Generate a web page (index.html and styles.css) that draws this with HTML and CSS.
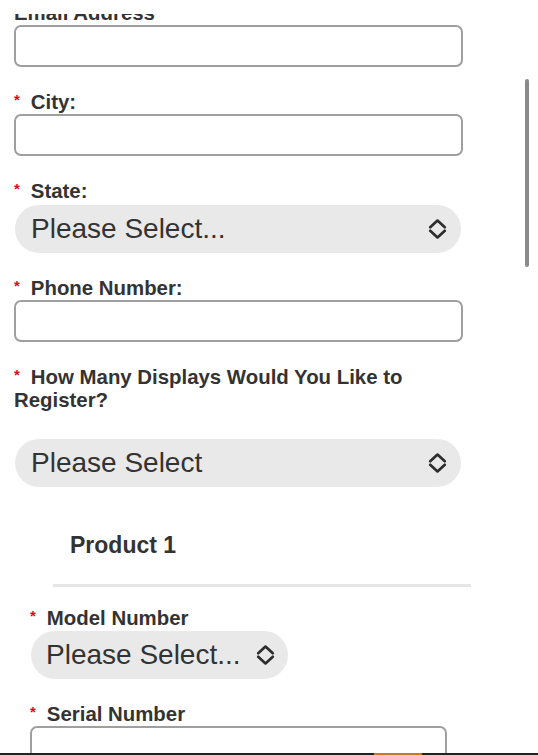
FILE: index.html
```html
<!DOCTYPE html>
<html lang="en">
<head>
<meta charset="utf-8">
<title>Register Displays</title>
<link rel="stylesheet" href="styles.css">
</head>
<body>
<div class="top-mask"></div>
<form class="form">
  <div class="field">
    <label class="label">Email Address</label>
    <input class="input" type="email">
  </div>
  <div class="field">
    <label class="label"><span class="req">*</span>City:</label>
    <input class="input" type="text">
  </div>
  <div class="field">
    <label class="label"><span class="req">*</span>State:</label>
    <div class="select">
      <span class="select-text">Please Select...</span>
      <svg class="chev" viewBox="0 0 19 22" width="19" height="22"><path d="M2.2 9.2 L9.5 2.6 L16.8 9.2 M2.2 12.8 L9.5 19.4 L16.8 12.8" fill="none" stroke="#2d2d2d" stroke-width="2.7" stroke-linecap="round" stroke-linejoin="round"/></svg>
    </div>
  </div>
  <div class="field">
    <label class="label"><span class="req">*</span>Phone Number:</label>
    <input class="input" type="tel">
  </div>
  <div class="field">
    <label class="label"><span class="req">*</span>How Many Displays Would You Like to Register?</label>
    <div class="select select-spaced">
      <span class="select-text">Please Select</span>
      <svg class="chev" viewBox="0 0 19 22" width="19" height="22"><path d="M2.2 9.2 L9.5 2.6 L16.8 9.2 M2.2 12.8 L9.5 19.4 L16.8 12.8" fill="none" stroke="#2d2d2d" stroke-width="2.7" stroke-linecap="round" stroke-linejoin="round"/></svg>
    </div>
  </div>

  <section class="product">
    <h2 class="product-title">Product 1</h2>
    <hr class="divider">
    <div class="pfield">
      <label class="label"><span class="req">*</span>Model Number</label>
      <div class="select select-small">
        <span class="select-text">Please Select...</span>
        <svg class="chev" viewBox="0 0 19 22" width="19" height="22"><path d="M2.2 9.2 L9.5 2.6 L16.8 9.2 M2.2 12.8 L9.5 19.4 L16.8 12.8" fill="none" stroke="#2d2d2d" stroke-width="2.7" stroke-linecap="round" stroke-linejoin="round"/></svg>
      </div>
    </div>
    <div class="pfield">
      <label class="label"><span class="req">*</span>Serial Number</label>
      <input class="input input-product" type="text">
    </div>
  </section>
</form>
<div class="scroll-thumb"></div>
<div class="bottom-bar"><div class="bottom-accent"></div></div>
</body>
</html>
```

FILE: styles.css
```css
html, body {
  margin: 0;
  padding: 0;
  overflow: hidden;
  background: #ffffff;
}

body {
  font-family: "Liberation Sans", Arial, Helvetica, sans-serif;
  color: #333333;
}

.top-mask {
  position: fixed;
  top: 0;
  left: 0;
  right: 0;
  height: 14px;
  background: #ffffff;
  z-index: 5;
}

.form {
  width: 449px;
  padding: 2px 0 0 14px;
  margin: 0;
}

.field {
  margin-bottom: 24px;
}

.label {
  display: block;
  font-size: 20.4px;
  font-weight: bold;
  line-height: 23px;
  color: #333333;
}

.req {
  font-size: 15px;
  line-height: 15px;
  margin-right: 11px;
  color: #d0101e;
  vertical-align: 4px;
}

.input {
  display: block;
  box-sizing: border-box;
  width: 449px;
  height: 42px;
  margin: 0;
  border: 2px solid #9f9f9f;
  border-radius: 7px;
  background: #ffffff;
  font: inherit;
}

.select {
  box-sizing: border-box;
  display: flex;
  align-items: center;
  justify-content: space-between;
  width: 446px;
  height: 48px;
  margin: 2px 0 0 1px;
  padding: 0 14px 0 16px;
  border-radius: 24px;
  background: #e9e9e9;
}

.select-spaced {
  margin-top: 27px;
}

.select-text {
  font-size: 28px;
  line-height: 32px;
  color: #333333;
  white-space: nowrap;
}

.chev {
  display: block;
  flex: none;
}

.product {
  padding: 21px 16px 0 16px;
}

.product-title {
  margin: 0;
  padding-left: 40px;
  font-size: 23px;
  line-height: 26px;
  font-weight: bold;
  color: #333333;
}

.divider {
  width: 418px;
  height: 3px;
  margin: 26px 0 0 23px;
  border: 0;
  background: #e6e6e6;
}

.pfield {
  margin-top: 20px;
}

.pfield + .pfield {
  margin-top: 24px;
}

.select-small {
  display: inline-flex;
  width: auto;
  gap: 15px;
  margin: 1px 0 0 1px;
  padding: 0 13px 0 15px;
}

.input-product {
  width: 417px;
  margin-top: 0;
}

.scroll-thumb {
  position: fixed;
  top: 79px;
  left: 525px;
  width: 4px;
  height: 188px;
  border-radius: 2px;
  background: #8a8a8a;
  z-index: 6;
}

.bottom-bar {
  position: fixed;
  left: 0;
  right: 0;
  bottom: 0;
  height: 2px;
  background: #222222;
  z-index: 6;
}

.bottom-accent {
  width: 48px;
  height: 2px;
  margin-left: 374px;
  background: #c47a2c;
}
```
